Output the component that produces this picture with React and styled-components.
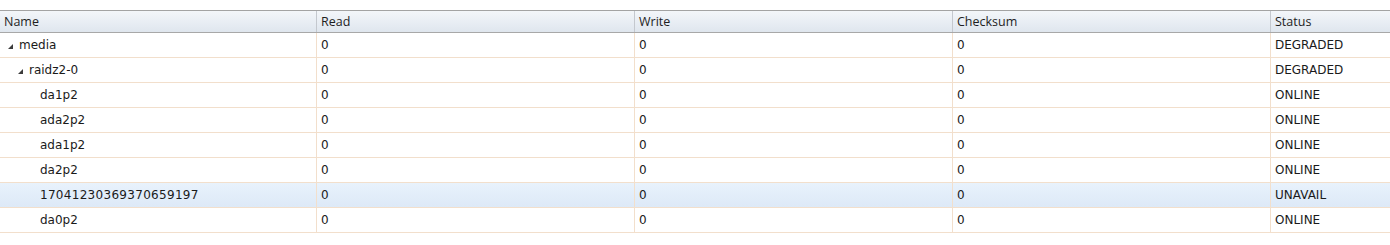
import React from "react";
import styled, { createGlobalStyle } from "styled-components";

const Global = createGlobalStyle`
  html, body { margin: 0; padding: 0; background: #ffffff; }
  body { font-family: "DejaVu Sans", Verdana, sans-serif; }
`;

const Wrap = styled.div`
  padding-top: 10px;
  width: 1390px;
`;

const cols = "317px 318px 318px 318px 1fr";

const HeaderRow = styled.div`
  display: grid;
  grid-template-columns: ${cols};
  height: 21px;
  border-top: 1px solid #a3a3a3;
  border-bottom: 1px solid #a8a8a8;
  background: linear-gradient(to bottom, #f3f6f9 0%, #e9eef4 50%, #dfe6ee 100%);
`;

const HeaderCell = styled.div`
  display: flex;
  align-items: center;
  padding-left: 4px;
  font-family: "Open Sans", "Noto Sans", sans-serif;
  font-size: 12.5px;
  color: #1e1e1e;
  border-right: ${(p) => (p.$last ? "none" : "1px solid #c4c8ce")};
  white-space: nowrap;
  overflow: hidden;
`;

const Row = styled.div`
  display: grid;
  grid-template-columns: ${cols};
  height: 24px;
  border-bottom: 1px solid #f2dfcc;
  background: ${(p) =>
    p.$selected
      ? "linear-gradient(to bottom, #e8f2fc 0%, #dde9f7 100%)"
      : "#ffffff"};
`;

const Cell = styled.div`
  display: flex;
  align-items: center;
  padding-left: 4px;
  padding-bottom: 1px;
  font-size: 12px;
  color: #1a1a1a;
  border-right: ${(p) => (p.$last ? "none" : "1px solid #f2dfcc")};
  white-space: nowrap;
  overflow: hidden;
`;

const NameCell = styled(Cell)`
  padding-left: ${(p) => p.$indent}px;
`;

const NameText = styled.span`
  letter-spacing: ${(p) => (p.$numeric ? "0.3px" : "0")};
`;

const Expander = styled.span`
  display: inline-block;
  width: 0;
  height: 0;
  border-left: 5px solid transparent;
  border-bottom: 5px solid #3c3c3c;
  margin-right: 6px;
  margin-top: 3px;
`;

const rows = [
  { name: "media", level: 0, expandable: true, status: "DEGRADED" },
  { name: "raidz2-0", level: 1, expandable: true, status: "DEGRADED" },
  { name: "da1p2", level: 2, status: "ONLINE" },
  { name: "ada2p2", level: 2, status: "ONLINE" },
  { name: "ada1p2", level: 2, status: "ONLINE" },
  { name: "da2p2", level: 2, status: "ONLINE" },
  { name: "17041230369370659197", level: 2, status: "UNAVAIL", selected: true },
  { name: "da0p2", level: 2, status: "ONLINE" },
];

const indentFor = (r) => {
  if (r.level === 0) return 8;
  if (r.level === 1) return 18;
  return 40;
};

export default function App() {
  return (
    <>
      <Global />
      <Wrap>
        <HeaderRow>
          <HeaderCell>Name</HeaderCell>
          <HeaderCell>Read</HeaderCell>
          <HeaderCell>Write</HeaderCell>
          <HeaderCell>Checksum</HeaderCell>
          <HeaderCell $last>Status</HeaderCell>
        </HeaderRow>
        {rows.map((r) => (
          <Row key={r.name} $selected={r.selected}>
            <NameCell $indent={indentFor(r)}>
              {r.expandable && <Expander />}
              <NameText $numeric={/^\d+$/.test(r.name)}>{r.name}</NameText>
            </NameCell>
            <Cell>0</Cell>
            <Cell>0</Cell>
            <Cell>0</Cell>
            <Cell $last>{r.status}</Cell>
          </Row>
        ))}
      </Wrap>
    </>
  );
}
